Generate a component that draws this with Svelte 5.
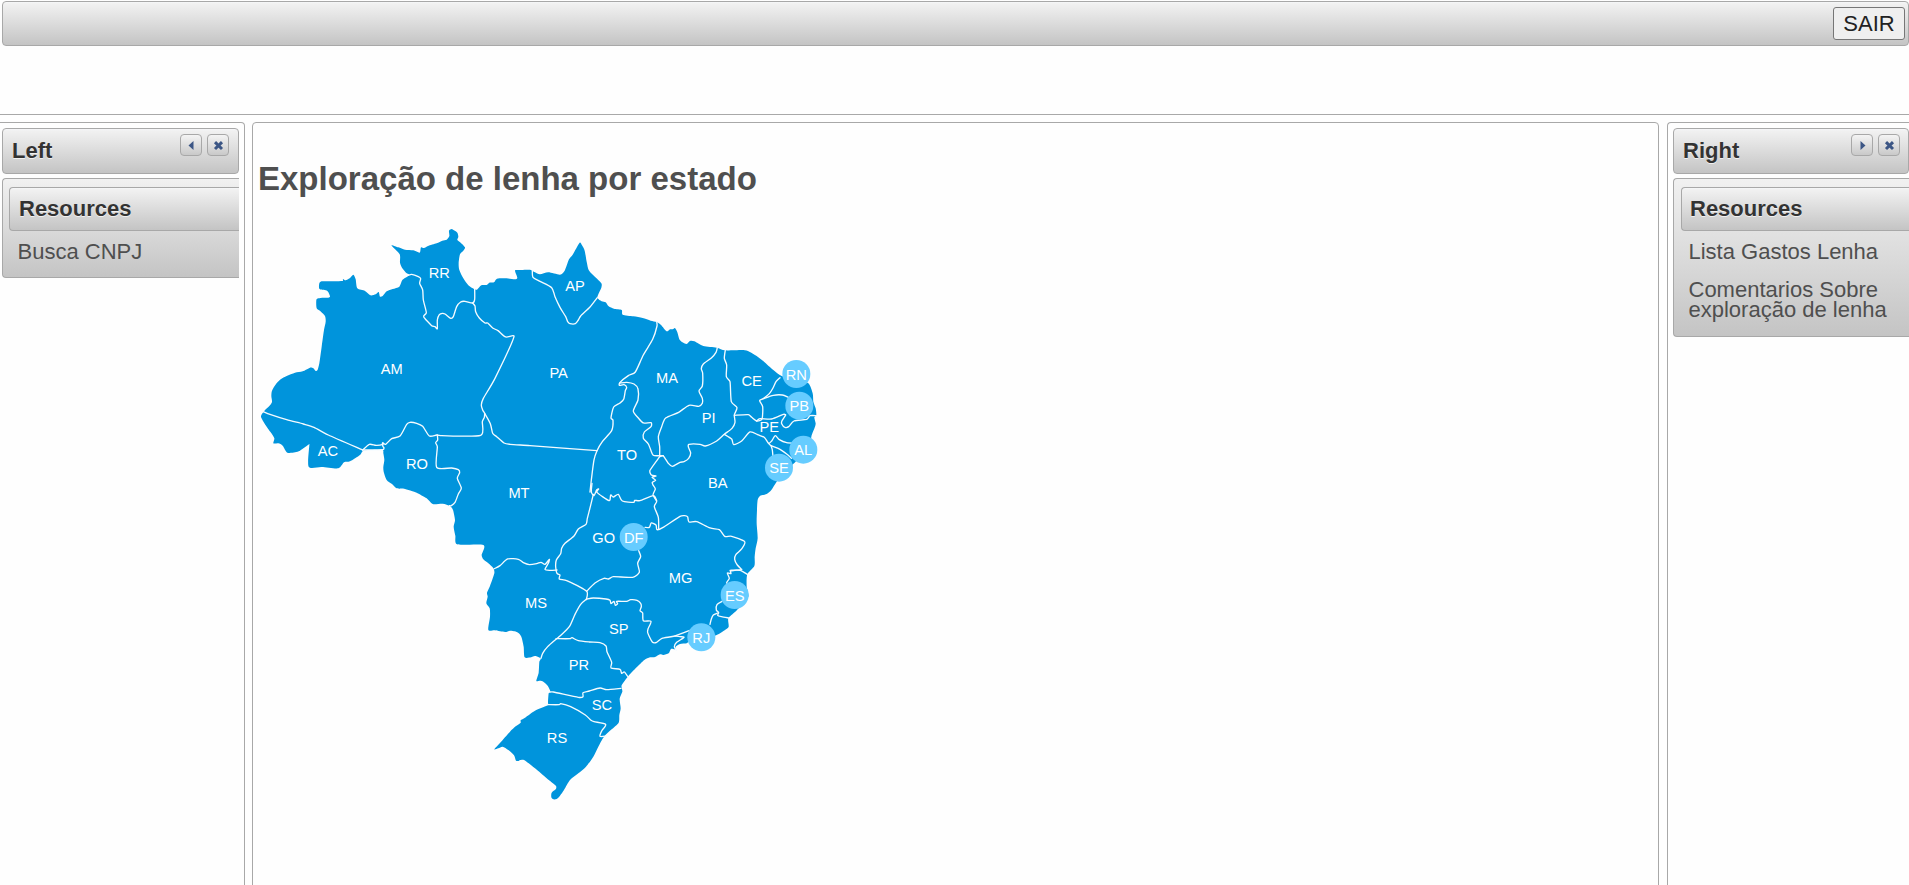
<script>
  // The map is drawn on a canvas of 3 units per pixel.
  const coast = `43,573 60,556 66,545 64,528 66,512 78,492 92,478 110,468 135,458 158,454 180,443 190,445 197,453 203,449 208,430 215,380 222,330 227,305 225,288 213,275 200,265 199,240 205,235 220,233 235,233 240,229 232,213 210,208 207,204 208,190 215,184 278,183 279,177 287,181 299,175 310,164 317,178 322,205 345,213 361,226 377,223 386,216 390,230 398,228 410,214 428,207 448,200 457,180 475,168
  477,163 468,158 457,145 450,128 449,103 424,76 445,82 465,89 490,91 509,98 513,82 522,84 534,78 560,70 577,62 590,59 598,48 597,32 605,27 612,31 622,38 625,50 622,60 632,68 645,82 640,92 630,103 626,130 628,150 640,175 655,196 672,207
  681,209 694,196 710,195 718,188 732,187 741,176 770,175 795,178 802,173 795,152 804,150 840,149 848,153
  855,157 870,163 895,157 930,164 944,152 957,118 968,104 989,68 996,76 1004,92 1010,125 1016,150 1030,166 1054,190 1054,203 1042,232
  1055,244 1067,247 1076,259 1092,266 1115,270 1118,284 1150,289 1178,294 1202,302 1220,306 1233,315 1250,334 1260,328 1268,328 1275,324 1282,337 1288,358 1296,366 1310,372 1320,363 1333,364 1360,378 1400,383 1425,391 1480,390 1498,395 1520,408 1542,425 1570,450 1595,468
  1640,480 1675,490 1688,520 1690,545 1697,565 1699,585 1693,592 1697,610 1695,620 1684,650 1680,685 1634,728 1610,750 1580,785 1564,810 1550,822 1530,828 1523,840 1521,870 1520,910 1523,955 1517,985 1514,1010 1513,1038 1492,1063 1490,1100 1495,1130 1470,1160 1455,1176 1435,1195 1436,1220 1425,1230 1400,1245 1360,1255 1318,1262 1310,1270 1290,1272 1277,1280 1275,1288 1263,1287 1256,1300 1240,1305 1230,1303 1215,1311 1200,1312 1183,1320 1160,1342 1135,1368 1115,1396 1116,1407 1117,1415 1109,1436 1112,1465 1108,1485 1106,1508 1085,1528 1062,1550 1045,1580 1030,1610 1008,1640 985,1660 960,1680 942,1710 930,1727 920,1737 910,1738 904,1732 905,1718 917,1708 918,1698 890,1675 855,1645 822,1620 810,1620 806,1623 798,1622 792,1606 775,1590 758,1580 745,1585 733,1588 750,1569 780,1535 797,1519 812,1508 812,1501 825,1493 855,1472 893,1456
  894,1446 896,1420 901,1414 893,1397 880,1385 870,1382 859,1383 866,1358 868,1325 872,1315 855,1308 843,1312 824,1312 821,1280 815,1253 808,1241 795,1234 780,1232 765,1236 735,1231 715,1230 720,1190 719,1165 709,1150 713,1130 711,1118 720,1098 733,1060 730,1045 715,1030 700,1018 695,1005 700,975 621,973 616,947 611,920 615,900 609,870 600,858 578,851 548,852 530,835 500,818 485,813 465,807 440,805 426,792 410,780 401,755 400,740 403,720 400,700 398,690 340,692 330,705 300,724 282,727 265,745 215,741 176,740 178,675 178,672 150,692 135,697 112,698 98,677 85,670 70,670 73,655 62,637 50,620 33,590`

  const borders = [
    { dx: 0, dy: 0, lines: [
      '40,575 60,583 110,599 160,612 192,622 235,645 338,690',
      '338,690 358,673 378,676 396,674 398,668 407,673 425,656 450,648 470,613 480,607 500,610 518,619 538,648 560,645 575,647 692,646 697,605 703,592 704,580',
      '475,166 485,163 505,170 512,176 509,190 518,210 520,240 529,278 521,290 545,317 555,320 562,326 562,300 568,284 577,280 585,282 602,295 610,290 620,260 632,246 645,244 668,249 674,238 674,207',
      '668,249 675,258 677,275 688,294 705,309 713,309 728,324 744,332 767,351 792,350 735,475 700,535 694,555 698,570 704,580 721,611 728,640 740,650 762,669 780,673 840,677 1041,692',
      '562,645 563,660 557,668 562,680 560,742 605,744 625,749 629,758 622,775 634,804 625,822 615,847 604,857 598,857',
      '338,690 398,689 402,684 398,678 400,670'
    ]},
    { dx: 630, dy: 0, lines: [
      '217,151 219,172 240,184 275,203 285,230 300,262 317,290 323,305 330,311 346,311 355,300 362,288 390,261 412,233',
      '590,304 591,318 578,358 550,405 526,456 505,467 480,487 478,496 492,494 500,502 496,512 491,538 480,549 461,561 453,594 459,601 455,632 427,665 411,692 402,720 394,780 390,816',
      '480,489 500,487 522,492 534,507 534,540 520,573 535,594 550,609 573,608 573,620 553,636 550,655 565,672 577,702 583,707 610,707'
    ]},
    { dx: 1110, dy: 210, lines: [
      '292,173 288,187 274,204 250,222 244,236 248,250 247,288 237,303 247,325 247,340 236,349 207,346 176,367 137,384 125,410 115,440 119,470 119,500',
      '316,180 313,205 320,225 319,260 330,275 334,335 351,353 343,375 345,397 336,415 313,433 290,453 256,468 240,463 207,463 205,471 212,489 206,505 192,515 180,517 157,529 145,520 130,498 119,500',
      '343,376 385,374 395,382 410,393 426,387 428,350 419,332 430,326 448,311 459,294 468,275 480,263',
      '430,326 460,316 487,315 505,322',
      '410,393 420,386 455,387 490,373 497,375 486,392 485,401 495,412 506,410 522,393 560,388 570,377 590,377',
      '313,433 335,447 341,464 365,453 390,426 415,435 434,443 446,460 455,453 466,437 478,449 500,458 530,460',
      '446,460 453,467 480,478 500,492 515,505',
      '453,467 457,480 459,500',
      '119,500 90,541 94,555 108,558 96,562 107,571 97,577 99,585 106,597 99,615 110,634 103,650 115,682 116,718'
    ]},
    { dx: 630, dy: 720, lines: [
      '396,70 394,96 402,107 410,90 416,87 411,97 447,122 452,105 460,111 475,103 487,123 522,127 524,121 540,122 580,107 590,122',
      '400,103 391,140 382,175 378,193 355,207 342,228 315,250 305,265 302,281 289,300 287,320 291,340 300,345 298,357 320,362 380,394 379,419',
      '380,394 405,369 432,355 445,357 460,350 518,352 538,337 533,310 542,290 536,272',
      '555,202 568,202 574,189 588,195 591,209 608,203 660,169 674,167 683,171 687,186 710,185 750,204 778,209 794,229 815,229 854,245 845,267 828,283 824,298 832,315 845,328',
      '845,329 812,333 813,341 802,339 808,355 800,368 805,375',
      '810,331 840,331 862,343',
      '103,326 120,317 143,297 175,298 190,308 208,314 230,311 243,307 255,313 268,298 265,310 255,328 270,331 291,330',
      '380,417 400,414 438,417 450,421 453,431 462,424 466,436 473,431 470,424 500,424 512,419 531,421 542,430 544,440 540,452 548,459 550,482 573,484 564,507 563,518 577,546 590,547 606,535 645,528 688,512 700,510',
      '645,528 660,530 672,532 650,547 643,560 649,571',
      '380,417 362,433 345,463 328,500 300,528 288,538 263,560 248,580 243,595',
      '288,536 330,536 336,533 355,542 388,546 420,548 438,558 441,575 455,607 453,624 480,628 485,640 493,636 503,649',
      '269,696 280,696 355,712 369,710 369,698 388,693 420,684 440,689 483,685',
      '263,734 298,734 302,731 332,740 376,765 393,781 402,785 437,793 425,813 420,829 439,828'
      ,'786,424 771,434 769,450 776,458 773,466 785,470 806,474',
      '773,459 760,465 754,477 750,493'
    ]}
  ]

  const states = [
    ['AM',425,447],['RR',568,158],['AP',975,197],['PA',926,459],['AC',234,692],['RO',501,731],['TO',1131,704],['MA',1251,474],['PI',1376,594],['CE',1505,482],['PE',1558,620],['BA',1403,788],['MT',807,819],['GO',1061,953],['MG',1292,1074],['MS',858,1149],['SP',1106,1227],['PR',987,1334],['SC',1056,1455],['RS',921,1553]
  ]
  const pins = [['RN',1639,462],['PB',1648,557],['AL',1660,689],['SE',1587,743],['DF',1151,951],['ES',1454,1125],['RJ',1354,1252]]

  // Lightly rounded curve through a list of points.
  function curve(text, closed = false) {
    const p = text.trim().split(/\s+/).map((s) => s.split(',').map(Number))
    const n = p.length
    const at = (i) => (closed ? p[(i + n) % n] : p[Math.max(0, Math.min(n - 1, i))])
    let d = `M${p[0]}`
    for (let i = 0; i < (closed ? n : n - 1); i++) {
      const [a, b, c, e] = [at(i - 1), at(i), at(i + 1), at(i + 2)]
      const len = Math.hypot(c[0] - b[0], c[1] - b[1])
      const handle = (u, v) => {
        const m = Math.hypot(v[0] - u[0], v[1] - u[1]) || 1
        const k = Math.min(m / 8, len / 3) / m
        return [(v[0] - u[0]) * k, (v[1] - u[1]) * k]
      }
      const h = handle(a, c), g = handle(b, e)
      d += `C${b[0] + h[0]},${b[1] + h[1]} ${c[0] - g[0]},${c[1] - g[1]} ${c}`
    }
    return closed ? d + 'Z' : d
  }
</script>

{#snippet tools(direction)}
  <div class="tools">
    <button aria-label="Toggle"><svg viewBox="0 0 20 20"><path d={direction === 'left' ? 'M12.5 6v9L7.5 10.5z' : 'M8.5 6v9l5-4.5z'} /></svg></button>
    <button aria-label="Close"><svg viewBox="0 0 20 20"><path class="cross" d="M7 7.2l7 6.8M14 7.2l-7 6.8" /></svg></button>
  </div>
{/snippet}

<div class="page">
  <header><div class="toolbar"><button class="exit">SAIR</button></div></header>
  <div class="layout">
    <aside class="pane left">
      <div class="title">Left {@render tools('left')}</div>
      <div class="menu">
        <h3>Resources</h3>
        <p>Busca CNPJ</p>
      </div>
    </aside>
    <main class="pane">
      <h1>Exploração de lenha por estado</h1>
      <svg class="map" viewBox="0 0 1740 1760">
        <path class="land" d={curve(coast, true)} />
        {#each borders as group}
          <g class="border" transform="translate({group.dx} {group.dy})">
            {#each group.lines as line}<path d={curve(line)} />{/each}
          </g>
        {/each}
        {#each states as [name, x, y]}<text {x} y={y + 15}>{name}</text>{/each}
        {#each pins as [name, x, y]}
          <circle cx={x} cy={y} r="42" />
          <text {x} y={y + 17}>{name}</text>
        {/each}
      </svg>
    </main>
    <aside class="pane right">
      <div class="title">Right {@render tools('right')}</div>
      <div class="menu">
        <h3>Resources</h3>
        <p>Lista Gastos Lenha</p>
        <p>Comentarios Sobre exploração de lenha</p>
      </div>
    </aside>
  </div>
</div>

<style>
  :global(body) { background: #fefefe; overflow: hidden; }
  * { box-sizing: border-box; }
  .page { height: 885px; overflow: hidden; display: flex; flex-direction: column; font: 22px/26px "Liberation Sans", Arial, sans-serif; color: #4f4f4f; }
  header { height: 115px; flex: none; border-bottom: 1px solid #a8a8a8; padding: 1px 0 0 2px; }
  .toolbar { height: 45px; border: 1px solid #a8a8a8; border-radius: 4px; display: flex; justify-content: flex-end; padding: 5px 3px; background: linear-gradient(#f6f7f9, #f1f1f1 4%, #c4c4c4); }
  .exit { width: 72px; height: 33px; border: 1px solid #767676; border-radius: 3px; background: #efefef; padding: 0; font: 22px "Liberation Sans", Arial, sans-serif; color: #222; line-height: 29px; }
  .layout { flex: 1; min-height: 0; display: grid; grid-template-columns: 245px 1407px 242px; column-gap: 7px; padding-top: 7px; }
  .pane { border: 1px solid #a8a8a8; border-radius: 4px; height: 780px; min-width: 0; }
  .left { border-left: 0; border-top-left-radius: 0; padding: 5px 5px 0 2px; }
  .right { border-right: 0; border-top-right-radius: 0; padding: 5px 0 0 5px; margin-left: 1px; margin-right: -1px; }
  .title, h3 { font-size: 22px; font-weight: bold; color: #333; text-shadow: 0 1px 0 rgba(255,255,255,.7); border: 1px solid #a8a8a8; border-radius: 4px; background: linear-gradient(#f6f7f9, #f1f1f1 4%, #c4c4c4); }
  .title { height: 46px; display: flex; justify-content: space-between; padding: 9px 9px 0 9px; }
  .right .title { padding-right: 8px; }
  .tools { display: flex; gap: 5px; margin-top: -4px; }
  .tools button { width: 22px; height: 22px; padding: 0; border: 1px solid #a8a8a8; border-radius: 4px; background: linear-gradient(#f4f4f4, #c9c9c9); }
  .tools svg { width: 20px; height: 20px; display: block; fill: #3c5685; }
  .tools .cross { stroke: #3c5685; stroke-width: 3; fill: none; }
  .menu { margin-top: 4px; border: 1px solid #a8a8a8; border-right: 0; border-radius: 4px 0 0 4px; background: linear-gradient(#f1f1f1, #c4c4c4); padding: 8px 0 15px 6px; }
  .right .menu { padding-left: 7px; padding-bottom: 16px; }
  h3 { margin: 0 0 11px; height: 44px; border-right: 0; border-radius: 4px 0 0 4px; padding: 8px 9px; line-height: 26px; }
  .right h3 { padding-left: 8px; }
  p { margin: 0 0 18px; padding-left: 8.5px; line-height: 20px; }
  .right p { padding-left: 7.5px; }
  p:last-child { margin-bottom: 0; }
  main.pane { padding: 36px 5px 0; }
  h1 { margin: 0; font-size: 33px; line-height: 40px; }
  .map { display: block; width: 580px; height: 586.67px; margin: 21px 0 0 -8px; overflow: visible; }
  .land { fill: #0094dc; }
  .border { fill: none; stroke: #f4fbff; stroke-width: 4; stroke-linejoin: round; stroke-linecap: round; }
  text { fill: #fff; font-size: 44px; text-anchor: middle; }
  circle { fill: #66ccff; }
</style>
